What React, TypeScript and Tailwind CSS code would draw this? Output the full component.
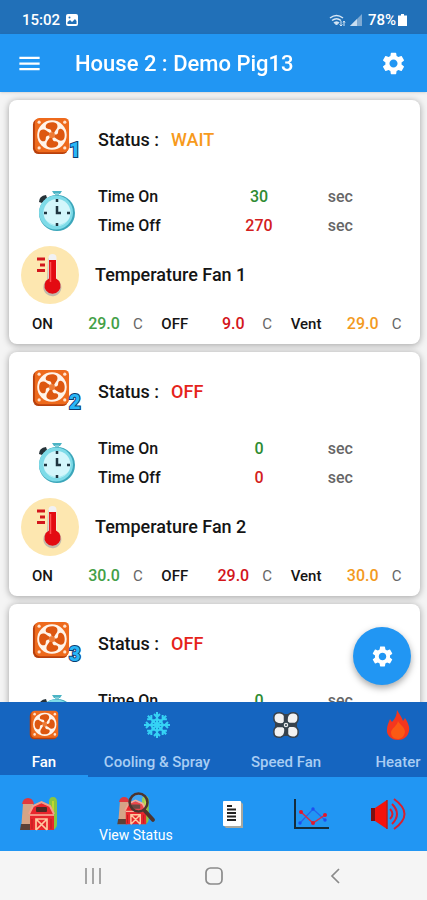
import {ReactNode} from "react";
import {MdMenu, MdSettings} from "react-icons/md";

interface FanInfo {
    id: number;
    status: string;
    timeOn: number;
    timeOff: number;
    on: string;
    off: string;
    vent: string;
}

const fans: FanInfo[] = [
    {id: 1, status: 'WAIT', timeOn: 30, timeOff: 270, on: '29.0', off: '9.0', vent: '29.0'},
    {id: 2, status: 'OFF', timeOn: 0, timeOff: 0, on: '30.0', off: '29.0', vent: '30.0'},
    {id: 3, status: 'OFF', timeOn: 0, timeOff: 0, on: '30.0', off: '29.0', vent: '30.0'},
];

const FanIcon = ({className}: { className: string }) => (
    <svg viewBox="0 0 40 40" className={className} aria-hidden="true">
        <rect x="1" y="2" width="37" height="37" rx="6" fill="#b8400c"/>
        <rect x="3" y="1" width="36" height="36" rx="5" fill="#ee6a1c"/>
        <g fill="#ffe3cf">
            <circle cx="7.5" cy="5.5" r="1.7"/>
            <circle cx="34.5" cy="5.5" r="1.7"/>
            <circle cx="7.5" cy="32.5" r="1.7"/>
            <circle cx="34.5" cy="32.5" r="1.7"/>
        </g>
        <circle cx="21" cy="19" r="15.5" fill="#fff4ea"/>
        {[0, 90, 180, 270].map((deg) => (
            <path key={deg} transform={`rotate(${deg} 21 19)`} fill="#dd5710"
                  d="M20.5 16C20.5 13.500 19.500 12.500 17.500 12.500C15 12.500 14 11 14.500 9C15.500 6 20 5 23.500 5.800C26.500 6.500 27.500 9 26.500 11.500C25.500 13.500 24 15 23 17Z"/>
        ))}
        <rect x="18" y="16" width="6" height="6" rx="2" fill="#ee7a34"/>
    </svg>
);

const ClockIcon = () => (
    <svg viewBox="0 0 40 42" className="h-[42px] w-10" aria-hidden="true">
        <path d="M2 12Q2 6 9 5L10 8L5 13Z" fill="#263238"/>
        <path d="M15 1H25L23 4H17Z" fill="#4bb3c4"/>
        <rect x="18" y="3" width="4" height="4" fill="#80cbd6"/>
        <circle cx="20" cy="23" r="18" fill="#3ba6ba"/>
        <circle cx="19" cy="22.500" r="17" fill="#7edbe8"/>
        <circle cx="20" cy="22.500" r="13.500" fill="#d3f6fb"/>
        <path d="M9 30A13 13 0 0 0 31 30A15 15 0 0 1 9 30" fill="#a7ebf3"/>
        <path d="M20 9V12M20 33V36M7 23H10M30 23H33M20 16V23H24" fill="none" stroke="#1f3540" strokeWidth="2.500"/>
    </svg>
);

const ThermometerIcon = () => (
    <svg viewBox="0 0 58 58" className="size-[58px]" aria-hidden="true">
        <circle cx="29" cy="29" r="29" fill="#fde7b0"/>
        <path d="M27 13A4.500 4.500 0 0 1 35 13V33A9 9 0 1 1 26 34Z" fill="#c3b9aa"/>
        <path d="M27.500 12A4 4 0 0 1 35.500 12V33H27.500Z" fill="#f1f1f4"/>
        <path d="M28 14H35V32.500A8 8 0 1 1 28 32.500Z" fill="#e30b12"/>
        <path d="M29.500 16V36" stroke="#ff5252" strokeWidth="1.500"/>
        <path d="M16 13H24M19 19H24M16 24.500H24" stroke="#d3161c" strokeWidth="3"/>
    </svg>
);

const SnowIcon = () => (
    <svg viewBox="0 0 28 28" className="size-7" fill="none" stroke="#35d3f5" strokeWidth="2" aria-hidden="true">
        {[0, 45, 90, 135, 180, 225, 270, 315].map((deg) => (
            <path key={deg} transform={`rotate(${deg} 14 14)`} d="M14 14V1M11 3L14 6L17 3M12 8L14 10L16 8"/>
        ))}
    </svg>
);

const SpeedFanIcon = () => (
    <svg viewBox="0 0 28 28" className="size-7" aria-hidden="true">
        <rect x="3" y="3" width="22" height="22" rx="4" fill="#37424d"/>
        {[0, 90, 180, 270].map((deg) => (
            <path key={deg} transform={`rotate(${deg} 14 14)`} fill="#f2f2f2" stroke="#37424d" strokeWidth="1.500"
                  d="M12.500 12.500L9 13Q3 13 2 9Q1 3 5 2Q11 1 12.500 5Z"/>
        ))}
        <circle cx="14" cy="14" r="3" fill="#e8eaed" stroke="#37474f" strokeWidth="1.500"/>
        <circle cx="14" cy="14" r="1" fill="#37474f"/>
    </svg>
);

const FlameIcon = () => (
    <svg viewBox="0 0 28 32" className="h-8 w-7" aria-hidden="true">
        <path d="M13 1C15 5 18 8 19 12L21 9C24 14 26 18 25 22C24 28 19 31 14 31C7 31 2 26 3 20C3 16 5 13 6 10L8 13C11 10 13 6 13 1Z" fill="#f4361e"/>
        <path d="M14 12C15 15 21 18 21 23C20 28 17 30 14 30C9 30 7 27 7 23C8 19 13 17 14 12Z" fill="#fa5a14"/>
    </svg>
);

const BarnShapes = () => (
    <>
        <path d="M29 34V6Q29 1 33 1Q37 1 37 6V28Q37 32 33 34Z" fill="#8bc53f"/>
        <path d="M33 5V30" stroke="#c0d72f" strokeWidth="2"/>
        <path d="M3 8H13V34H1Z" fill="#d5a487"/>
        <path d="M1 28H12V34H0Z" fill="#5d4037"/>
        <path d="M2 8Q3 2 8 2Q13 2 14 8Z" fill="#e0393e"/>
        <path d="M10 34V17L14 10L21 7L29 10L34 18V34Z" fill="#e8262c"/>
        <path d="M9 18L13 10L21.500 6L30 10L34 18" fill="none" stroke="#f3a08b" strokeWidth="2"/>
        <rect x="16" y="11" width="11" height="5" rx="1" fill="#4e2a24"/>
        <path d="M10 19H34" stroke="#f7b79d" strokeWidth="1.500"/>
        <path d="M16 34V23H27V34M16 23L27 34M27 23L16 34" fill="none" stroke="#ffc9a0" strokeWidth="1.700"/>
        <path d="M12 23V33M31 23V33" stroke="#b71c1c" strokeWidth="1"/>
    </>
);

const BarnIcon = () => (
    <svg viewBox="0 0 38 36" className="h-9 w-[38px]" aria-hidden="true"><BarnShapes/></svg>
);

const BarnSearchIcon = () => (
    <svg viewBox="0 0 46 40" className="h-[34px] w-10" aria-hidden="true">
        <g transform="translate(1 5)"><BarnShapes/></g>
        <path d="M33 23L43 34" stroke="#4e342e" strokeWidth="4.500" strokeLinecap="round"/>
        <circle cx="26" cy="13.500" r="10.500" fill="#ffffff" fillOpacity="0.150" stroke="#4e342e" strokeWidth="3"/>
    </svg>
);

const ReportIcon = () => (
    <svg viewBox="0 0 22 28" className="h-7 w-[22px]" aria-hidden="true">
        <path d="M4 28L1 25V3Q1 1 3 1H18L21 4V28Z" fill="#a8a8a0"/>
        <rect x="1" y="1" width="18" height="25" rx="1" fill="#fff"/>
        <path d="M5 6H10M5 9.500H14M5 13H14M5 16.500H14M5 20H14" stroke="#222" strokeWidth="1.800"/>
    </svg>
);

const ChartIcon = () => (
    <svg viewBox="0 0 36 32" className="h-8 w-9" aria-hidden="true">
        <path d="M2 1V30H36" fill="none" stroke="#142c3c" strokeWidth="2"/>
        <path d="M7 25L20 11L32 22" fill="none" stroke="#2563eb" strokeWidth="1.200"/>
        <g fill="#1d4ff0">
            <circle cx="7" cy="25" r="1.700"/>
            <circle cx="20" cy="11" r="1.700"/>
            <circle cx="32" cy="22" r="1.700"/>
        </g>
        <path d="M8 14L20 25L32 17" fill="none" stroke="#d32f4a" strokeWidth="1.500"/>
        <g fill="#e0182d">
            <circle cx="8" cy="14" r="2"/>
            <circle cx="20" cy="25" r="2"/>
            <circle cx="32" cy="17" r="2"/>
        </g>
    </svg>
);

const SpeakerIcon = () => (
    <svg viewBox="0 0 36 34" className="h-[34px] w-9" aria-hidden="true">
        <rect x="1" y="11" width="5" height="13" fill="#7d1010"/>
        <path d="M5 11L17 3V32L5 24Z" fill="#f5120c"/>
        <path d="M17 3V32" stroke="#b71c1c" strokeWidth="1.500"/>
        <path d="M20 12Q25 17 20 22M22 7Q32 17 22 27M24 2Q45 17 24 32" fill="none" stroke="#d8202f" strokeWidth="2"/>
    </svg>
);

const StatusBar = () => (
    <div className="flex h-[34px] shrink-0 items-center justify-between bg-[#2170b8] pr-5 pl-[22px] pt-1.5 text-[15px] font-medium text-white">
        <div className="flex items-center gap-1.5">
            <span>15:02</span>
            <svg viewBox="0 0 12 12" className="size-3" aria-hidden="true">
                <rect width="12" height="12" rx="2" fill="#fff"/>
                <path d="M1.500 10V8L4 6L6 8L9 5L10.500 7V10Z" fill="#2170b8"/>
                <circle cx="3.500" cy="3.500" r="1" fill="#2170b8"/>
            </svg>
        </div>
        <div className="flex items-center">
            <svg viewBox="0 0 17 13" className="h-[13px] w-[17px]" fill="none" stroke="#d6e6f5" aria-hidden="true">
                <path d="M1 4Q7.500-1 14 4M3 6.500Q7.500 3 12 6.500" strokeWidth="1.500"/>
                <path d="M5 8.500L7.500 11L10 8.500Q7.500 7 5 8.500Z" fill="#d6e6f5"/>
                <path d="M12 7V12M10.500 10.500L12 12L13.500 10.500M15 12V7M14 8.500L15 7L16 8.500" strokeWidth="1"/>
            </svg>
            <svg viewBox="0 0 12 12" className="mr-1.5 ml-1 size-3" aria-hidden="true">
                <path d="M0 12L12 0V12Z" fill="#7faad3"/>
                <path d="M0 12L7 5V12Z" fill="#c9ddf0"/>
            </svg>
            <span>78%</span>
            <svg viewBox="0 0 9 12" className="ml-0.5 h-3 w-[9px]" aria-hidden="true">
                <path d="M3 0H6V1.500H9V12H0V1.500H3Z" fill="#fff"/>
            </svg>
        </div>
    </div>
);

const TimeRow = ({label, value, color}: { label: string, value: number, color: string }) => (
    <div className="grid h-[29px] grid-cols-3 items-center">
        <span>{label}</span>
        <span className={`text-center ${color}`}>{value}</span>
        <span className="pl-[15px] text-[#666]">sec</span>
    </div>
);

const Reading = ({label, value, color}: { label: string, value: string, color: string }) => (
    <div className="flex items-center text-[15px]">
        <span className="w-11">{label}</span>
        <span className={`w-14 text-center text-base ${color}`}>{value}</span>
        <span className="pl-px font-normal text-[#666]">C</span>
    </div>
);

const FanCard = ({fan}: { fan: FanInfo }) => (
    <section className="shrink-0 rounded-lg bg-white pt-2 text-base font-medium text-[#151515] shadow-[0_1px_7px_rgba(0,0,0,0.35)]">
        <div className="flex h-16 items-center text-lg">
            <div className="flex w-[89px] pl-[23px] pb-1">
                <FanIcon className="size-[38px]"/>
                <svg viewBox="0 0 16 20" className="mt-[22px] -ml-0.5 h-5 w-4 shrink-0 overflow-visible" aria-hidden="true">
                    <text x="1" y="18" fontSize="20" fontWeight="900" fontFamily="Roboto, sans-serif" fill="#29b6f6"
                          stroke="#0b3c6e" strokeWidth="2" paintOrder="stroke">{fan.id}</text>
                </svg>
            </div>
            <h2>Status :</h2>
            <span className={`ml-3 ${fan.status === 'WAIT' ? 'text-[#f79a1c]' : 'text-[#e5231b]'}`}>{fan.status}</span>
        </div>
        <div className="mt-2.5 flex items-center">
            <div className="w-[89px] pl-7"><ClockIcon/></div>
            <div className="flex-1">
                <TimeRow label="Time On" value={fan.timeOn} color="text-[#2e8b32]"/>
                <TimeRow label="Time Off" value={fan.timeOff} color="text-[#d32020]"/>
            </div>
        </div>
        <div className="mt-1.5 flex items-center gap-4 pl-3 text-lg">
            <ThermometerIcon/>
            <h3>Temperature Fan {fan.id}</h3>
        </div>
        <div className="grid h-10 grid-cols-3 pl-[23px]">
            <Reading label="ON" value={fan.on} color="text-[#43a047]"/>
            <Reading label="OFF" value={fan.off} color="text-[#d3151b]"/>
            <Reading label="Vent" value={fan.vent} color="text-[#f39a1e]"/>
        </div>
    </section>
);

const Tab = ({label, icon, width, active}: { label: string, icon: ReactNode, width: string, active?: boolean }) => (
    <button type="button"
            className={`flex shrink-0 flex-col items-center border-b-2 pt-[7px] text-[15px] leading-5 font-medium ${width} ${active ? 'border-[#2196f3] text-white' : 'border-[#1565c0] text-[#a9cdf3]'}`}>
        <span className="flex h-8 items-center">{icon}</span>
        <span className="mt-[11px]">{label}</span>
    </button>
);

const App = () => {
    return (
        <div className="flex h-screen flex-col bg-[#f7f7f7] font-['Roboto',sans-serif]">
            <StatusBar/>
            <header className="z-10 flex h-[58px] shrink-0 items-center bg-[#2196f3] px-4 text-white shadow">
                <button type="button" aria-label="Menu"><MdMenu size={27}/></button>
                <h1 className="ml-8 flex-1 text-[22px] font-medium">House 2 : Demo Pig13</h1>
                <button type="button" aria-label="Settings" className="mr-1"><MdSettings size={27}/></button>
            </header>
            <main className="relative min-h-0 flex-1">
                <div className="flex h-full flex-col gap-2 overflow-y-auto bg-[#f4f4f4] pt-2 pr-[7px] pl-[9px] [scrollbar-width:none]">
                    {fans.map((fan) => <FanCard fan={fan} key={fan.id}/>)}
                </div>
                <button type="button" aria-label="Fan settings"
                        className="absolute right-4 bottom-[17px] flex size-[58px] items-center justify-center rounded-full bg-[#2196f3] text-white shadow-[0_3px_7px_rgba(0,0,0,0.35)]">
                    <MdSettings size={25}/>
                </button>
            </main>
            <nav className="flex h-[75px] shrink-0 overflow-hidden bg-[#1565c0]">
                <Tab label="Fan" icon={<FanIcon className="size-[30px]"/>} width="w-[88px]" active/>
                <Tab label="Cooling &amp; Spray" icon={<SnowIcon/>} width="w-[138px]"/>
                <Tab label="Speed Fan" icon={<SpeedFanIcon/>} width="w-[120px]"/>
                <Tab label="Heater" icon={<FlameIcon/>} width="w-[104px]"/>
            </nav>
            <nav className="flex h-[74px] shrink-0 bg-[#2196f3] text-white">
                <button type="button" aria-label="Houses" className="flex flex-1 items-center justify-center"><BarnIcon/></button>
                <button type="button" className="flex flex-[1.5] flex-col items-center justify-end pb-1.5 text-sm">
                    <BarnSearchIcon/>
                    <span>View Status</span>
                </button>
                <button type="button" aria-label="Report" className="flex flex-1 items-center justify-center"><ReportIcon/></button>
                <button type="button" aria-label="Chart" className="flex flex-1 items-center justify-center"><ChartIcon/></button>
                <button type="button" aria-label="Alarm" className="flex flex-1 items-center justify-center"><SpeakerIcon/></button>
            </nav>
            <div className="grid h-[49px] shrink-0 grid-cols-3 bg-[#f5f5f5] px-8">
                <button type="button" aria-label="Recent apps" className="flex items-center justify-center">
                    <svg viewBox="0 0 16 16" className="size-4" stroke="#8a8a8a" strokeWidth="1.500">
                        <path d="M1 0V16M8 0V16M15 0V16"/>
                    </svg>
                </button>
                <button type="button" aria-label="Home" className="flex items-center justify-center">
                    <svg viewBox="0 0 18 18" className="size-[18px]" fill="none" stroke="#8a8a8a" strokeWidth="1.700">
                        <rect x="1" y="1" width="16" height="16" rx="4.500"/>
                    </svg>
                </button>
                <button type="button" aria-label="Back" className="flex items-center justify-center">
                    <svg viewBox="0 0 10 16" className="h-4 w-2.5" fill="none" stroke="#8a8a8a" strokeWidth="1.700">
                        <path d="M9 1L2 8L9 15"/>
                    </svg>
                </button>
            </div>
        </div>
    )
}

export default App;
